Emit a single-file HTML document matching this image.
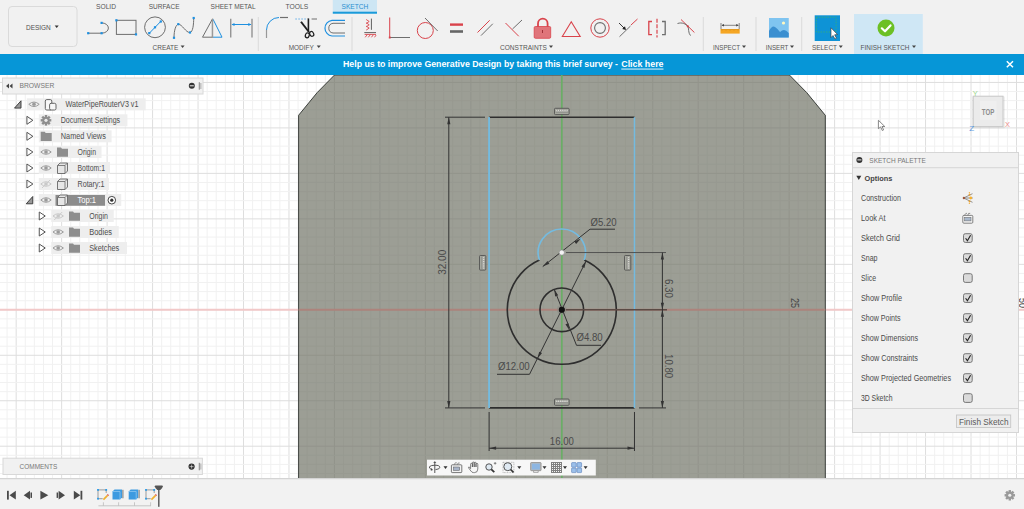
<!DOCTYPE html>
<html><head><meta charset="utf-8"><style>
html,body{margin:0;padding:0;width:1024px;height:509px;overflow:hidden;background:#f1f1f1;}
svg{display:block;font-family:"Liberation Sans",sans-serif;}
</style></head><body>
<svg width="1024" height="509" viewBox="0 0 1024 509">
<rect x="0" y="75" width="1024" height="403" fill="#ffffff"/>
<g>
<line x1="7.07" y1="75" x2="7.07" y2="478" stroke="#f1f1f1" stroke-width="1"/>
<line x1="16.16" y1="75" x2="16.16" y2="478" stroke="#dedede" stroke-width="1"/>
<line x1="25.25" y1="75" x2="25.25" y2="478" stroke="#f1f1f1" stroke-width="1"/>
<line x1="34.35" y1="75" x2="34.35" y2="478" stroke="#f1f1f1" stroke-width="1"/>
<line x1="43.44" y1="75" x2="43.44" y2="478" stroke="#f1f1f1" stroke-width="1"/>
<line x1="52.54" y1="75" x2="52.54" y2="478" stroke="#f1f1f1" stroke-width="1"/>
<line x1="61.63" y1="75" x2="61.63" y2="478" stroke="#dedede" stroke-width="1"/>
<line x1="70.72" y1="75" x2="70.72" y2="478" stroke="#f1f1f1" stroke-width="1"/>
<line x1="79.82" y1="75" x2="79.82" y2="478" stroke="#f1f1f1" stroke-width="1"/>
<line x1="88.91" y1="75" x2="88.91" y2="478" stroke="#f1f1f1" stroke-width="1"/>
<line x1="98.01" y1="75" x2="98.01" y2="478" stroke="#f1f1f1" stroke-width="1"/>
<line x1="107.10" y1="75" x2="107.10" y2="478" stroke="#dedede" stroke-width="1"/>
<line x1="116.19" y1="75" x2="116.19" y2="478" stroke="#f1f1f1" stroke-width="1"/>
<line x1="125.29" y1="75" x2="125.29" y2="478" stroke="#f1f1f1" stroke-width="1"/>
<line x1="134.38" y1="75" x2="134.38" y2="478" stroke="#f1f1f1" stroke-width="1"/>
<line x1="143.48" y1="75" x2="143.48" y2="478" stroke="#f1f1f1" stroke-width="1"/>
<line x1="152.57" y1="75" x2="152.57" y2="478" stroke="#dedede" stroke-width="1"/>
<line x1="161.66" y1="75" x2="161.66" y2="478" stroke="#f1f1f1" stroke-width="1"/>
<line x1="170.76" y1="75" x2="170.76" y2="478" stroke="#f1f1f1" stroke-width="1"/>
<line x1="179.85" y1="75" x2="179.85" y2="478" stroke="#f1f1f1" stroke-width="1"/>
<line x1="188.95" y1="75" x2="188.95" y2="478" stroke="#f1f1f1" stroke-width="1"/>
<line x1="198.04" y1="75" x2="198.04" y2="478" stroke="#dedede" stroke-width="1"/>
<line x1="207.13" y1="75" x2="207.13" y2="478" stroke="#f1f1f1" stroke-width="1"/>
<line x1="216.23" y1="75" x2="216.23" y2="478" stroke="#f1f1f1" stroke-width="1"/>
<line x1="225.32" y1="75" x2="225.32" y2="478" stroke="#f1f1f1" stroke-width="1"/>
<line x1="234.42" y1="75" x2="234.42" y2="478" stroke="#f1f1f1" stroke-width="1"/>
<line x1="243.51" y1="75" x2="243.51" y2="478" stroke="#dedede" stroke-width="1"/>
<line x1="252.60" y1="75" x2="252.60" y2="478" stroke="#f1f1f1" stroke-width="1"/>
<line x1="261.70" y1="75" x2="261.70" y2="478" stroke="#f1f1f1" stroke-width="1"/>
<line x1="270.79" y1="75" x2="270.79" y2="478" stroke="#f1f1f1" stroke-width="1"/>
<line x1="279.89" y1="75" x2="279.89" y2="478" stroke="#f1f1f1" stroke-width="1"/>
<line x1="288.98" y1="75" x2="288.98" y2="478" stroke="#dedede" stroke-width="1"/>
<line x1="298.07" y1="75" x2="298.07" y2="478" stroke="#f1f1f1" stroke-width="1"/>
<line x1="307.17" y1="75" x2="307.17" y2="478" stroke="#f1f1f1" stroke-width="1"/>
<line x1="316.26" y1="75" x2="316.26" y2="478" stroke="#f1f1f1" stroke-width="1"/>
<line x1="325.36" y1="75" x2="325.36" y2="478" stroke="#f1f1f1" stroke-width="1"/>
<line x1="334.45" y1="75" x2="334.45" y2="478" stroke="#dedede" stroke-width="1"/>
<line x1="343.54" y1="75" x2="343.54" y2="478" stroke="#f1f1f1" stroke-width="1"/>
<line x1="352.64" y1="75" x2="352.64" y2="478" stroke="#f1f1f1" stroke-width="1"/>
<line x1="361.73" y1="75" x2="361.73" y2="478" stroke="#f1f1f1" stroke-width="1"/>
<line x1="370.83" y1="75" x2="370.83" y2="478" stroke="#f1f1f1" stroke-width="1"/>
<line x1="379.92" y1="75" x2="379.92" y2="478" stroke="#dedede" stroke-width="1"/>
<line x1="389.01" y1="75" x2="389.01" y2="478" stroke="#f1f1f1" stroke-width="1"/>
<line x1="398.11" y1="75" x2="398.11" y2="478" stroke="#f1f1f1" stroke-width="1"/>
<line x1="407.20" y1="75" x2="407.20" y2="478" stroke="#f1f1f1" stroke-width="1"/>
<line x1="416.30" y1="75" x2="416.30" y2="478" stroke="#f1f1f1" stroke-width="1"/>
<line x1="425.39" y1="75" x2="425.39" y2="478" stroke="#dedede" stroke-width="1"/>
<line x1="434.48" y1="75" x2="434.48" y2="478" stroke="#f1f1f1" stroke-width="1"/>
<line x1="443.58" y1="75" x2="443.58" y2="478" stroke="#f1f1f1" stroke-width="1"/>
<line x1="452.67" y1="75" x2="452.67" y2="478" stroke="#f1f1f1" stroke-width="1"/>
<line x1="461.77" y1="75" x2="461.77" y2="478" stroke="#f1f1f1" stroke-width="1"/>
<line x1="470.86" y1="75" x2="470.86" y2="478" stroke="#dedede" stroke-width="1"/>
<line x1="479.95" y1="75" x2="479.95" y2="478" stroke="#f1f1f1" stroke-width="1"/>
<line x1="489.05" y1="75" x2="489.05" y2="478" stroke="#f1f1f1" stroke-width="1"/>
<line x1="498.14" y1="75" x2="498.14" y2="478" stroke="#f1f1f1" stroke-width="1"/>
<line x1="507.24" y1="75" x2="507.24" y2="478" stroke="#f1f1f1" stroke-width="1"/>
<line x1="516.33" y1="75" x2="516.33" y2="478" stroke="#dedede" stroke-width="1"/>
<line x1="525.42" y1="75" x2="525.42" y2="478" stroke="#f1f1f1" stroke-width="1"/>
<line x1="534.52" y1="75" x2="534.52" y2="478" stroke="#f1f1f1" stroke-width="1"/>
<line x1="543.61" y1="75" x2="543.61" y2="478" stroke="#f1f1f1" stroke-width="1"/>
<line x1="552.71" y1="75" x2="552.71" y2="478" stroke="#f1f1f1" stroke-width="1"/>
<line x1="561.80" y1="75" x2="561.80" y2="478" stroke="#dedede" stroke-width="1"/>
<line x1="570.89" y1="75" x2="570.89" y2="478" stroke="#f1f1f1" stroke-width="1"/>
<line x1="579.99" y1="75" x2="579.99" y2="478" stroke="#f1f1f1" stroke-width="1"/>
<line x1="589.08" y1="75" x2="589.08" y2="478" stroke="#f1f1f1" stroke-width="1"/>
<line x1="598.18" y1="75" x2="598.18" y2="478" stroke="#f1f1f1" stroke-width="1"/>
<line x1="607.27" y1="75" x2="607.27" y2="478" stroke="#dedede" stroke-width="1"/>
<line x1="616.36" y1="75" x2="616.36" y2="478" stroke="#f1f1f1" stroke-width="1"/>
<line x1="625.46" y1="75" x2="625.46" y2="478" stroke="#f1f1f1" stroke-width="1"/>
<line x1="634.55" y1="75" x2="634.55" y2="478" stroke="#f1f1f1" stroke-width="1"/>
<line x1="643.65" y1="75" x2="643.65" y2="478" stroke="#f1f1f1" stroke-width="1"/>
<line x1="652.74" y1="75" x2="652.74" y2="478" stroke="#dedede" stroke-width="1"/>
<line x1="661.83" y1="75" x2="661.83" y2="478" stroke="#f1f1f1" stroke-width="1"/>
<line x1="670.93" y1="75" x2="670.93" y2="478" stroke="#f1f1f1" stroke-width="1"/>
<line x1="680.02" y1="75" x2="680.02" y2="478" stroke="#f1f1f1" stroke-width="1"/>
<line x1="689.12" y1="75" x2="689.12" y2="478" stroke="#f1f1f1" stroke-width="1"/>
<line x1="698.21" y1="75" x2="698.21" y2="478" stroke="#dedede" stroke-width="1"/>
<line x1="707.30" y1="75" x2="707.30" y2="478" stroke="#f1f1f1" stroke-width="1"/>
<line x1="716.40" y1="75" x2="716.40" y2="478" stroke="#f1f1f1" stroke-width="1"/>
<line x1="725.49" y1="75" x2="725.49" y2="478" stroke="#f1f1f1" stroke-width="1"/>
<line x1="734.59" y1="75" x2="734.59" y2="478" stroke="#f1f1f1" stroke-width="1"/>
<line x1="743.68" y1="75" x2="743.68" y2="478" stroke="#dedede" stroke-width="1"/>
<line x1="752.77" y1="75" x2="752.77" y2="478" stroke="#f1f1f1" stroke-width="1"/>
<line x1="761.87" y1="75" x2="761.87" y2="478" stroke="#f1f1f1" stroke-width="1"/>
<line x1="770.96" y1="75" x2="770.96" y2="478" stroke="#f1f1f1" stroke-width="1"/>
<line x1="780.06" y1="75" x2="780.06" y2="478" stroke="#f1f1f1" stroke-width="1"/>
<line x1="789.15" y1="75" x2="789.15" y2="478" stroke="#dedede" stroke-width="1"/>
<line x1="798.24" y1="75" x2="798.24" y2="478" stroke="#f1f1f1" stroke-width="1"/>
<line x1="807.34" y1="75" x2="807.34" y2="478" stroke="#f1f1f1" stroke-width="1"/>
<line x1="816.43" y1="75" x2="816.43" y2="478" stroke="#f1f1f1" stroke-width="1"/>
<line x1="825.53" y1="75" x2="825.53" y2="478" stroke="#f1f1f1" stroke-width="1"/>
<line x1="834.62" y1="75" x2="834.62" y2="478" stroke="#dedede" stroke-width="1"/>
<line x1="843.71" y1="75" x2="843.71" y2="478" stroke="#f1f1f1" stroke-width="1"/>
<line x1="852.81" y1="75" x2="852.81" y2="478" stroke="#f1f1f1" stroke-width="1"/>
<line x1="861.90" y1="75" x2="861.90" y2="478" stroke="#f1f1f1" stroke-width="1"/>
<line x1="871.00" y1="75" x2="871.00" y2="478" stroke="#f1f1f1" stroke-width="1"/>
<line x1="880.09" y1="75" x2="880.09" y2="478" stroke="#dedede" stroke-width="1"/>
<line x1="889.18" y1="75" x2="889.18" y2="478" stroke="#f1f1f1" stroke-width="1"/>
<line x1="898.28" y1="75" x2="898.28" y2="478" stroke="#f1f1f1" stroke-width="1"/>
<line x1="907.37" y1="75" x2="907.37" y2="478" stroke="#f1f1f1" stroke-width="1"/>
<line x1="916.47" y1="75" x2="916.47" y2="478" stroke="#f1f1f1" stroke-width="1"/>
<line x1="925.56" y1="75" x2="925.56" y2="478" stroke="#dedede" stroke-width="1"/>
<line x1="934.65" y1="75" x2="934.65" y2="478" stroke="#f1f1f1" stroke-width="1"/>
<line x1="943.75" y1="75" x2="943.75" y2="478" stroke="#f1f1f1" stroke-width="1"/>
<line x1="952.84" y1="75" x2="952.84" y2="478" stroke="#f1f1f1" stroke-width="1"/>
<line x1="961.94" y1="75" x2="961.94" y2="478" stroke="#f1f1f1" stroke-width="1"/>
<line x1="971.03" y1="75" x2="971.03" y2="478" stroke="#dedede" stroke-width="1"/>
<line x1="980.12" y1="75" x2="980.12" y2="478" stroke="#f1f1f1" stroke-width="1"/>
<line x1="989.22" y1="75" x2="989.22" y2="478" stroke="#f1f1f1" stroke-width="1"/>
<line x1="998.31" y1="75" x2="998.31" y2="478" stroke="#f1f1f1" stroke-width="1"/>
<line x1="1007.41" y1="75" x2="1007.41" y2="478" stroke="#f1f1f1" stroke-width="1"/>
<line x1="1016.50" y1="75" x2="1016.50" y2="478" stroke="#dedede" stroke-width="1"/>
<line x1="1025.59" y1="75" x2="1025.59" y2="478" stroke="#f1f1f1" stroke-width="1"/>
<line x1="0" y1="73.36" x2="1024" y2="73.36" stroke="#f1f1f1" stroke-width="1"/>
<line x1="0" y1="82.45" x2="1024" y2="82.45" stroke="#dedede" stroke-width="1"/>
<line x1="0" y1="91.54" x2="1024" y2="91.54" stroke="#f1f1f1" stroke-width="1"/>
<line x1="0" y1="100.64" x2="1024" y2="100.64" stroke="#f1f1f1" stroke-width="1"/>
<line x1="0" y1="109.73" x2="1024" y2="109.73" stroke="#f1f1f1" stroke-width="1"/>
<line x1="0" y1="118.83" x2="1024" y2="118.83" stroke="#f1f1f1" stroke-width="1"/>
<line x1="0" y1="127.92" x2="1024" y2="127.92" stroke="#dedede" stroke-width="1"/>
<line x1="0" y1="137.01" x2="1024" y2="137.01" stroke="#f1f1f1" stroke-width="1"/>
<line x1="0" y1="146.11" x2="1024" y2="146.11" stroke="#f1f1f1" stroke-width="1"/>
<line x1="0" y1="155.20" x2="1024" y2="155.20" stroke="#f1f1f1" stroke-width="1"/>
<line x1="0" y1="164.30" x2="1024" y2="164.30" stroke="#f1f1f1" stroke-width="1"/>
<line x1="0" y1="173.39" x2="1024" y2="173.39" stroke="#dedede" stroke-width="1"/>
<line x1="0" y1="182.48" x2="1024" y2="182.48" stroke="#f1f1f1" stroke-width="1"/>
<line x1="0" y1="191.58" x2="1024" y2="191.58" stroke="#f1f1f1" stroke-width="1"/>
<line x1="0" y1="200.67" x2="1024" y2="200.67" stroke="#f1f1f1" stroke-width="1"/>
<line x1="0" y1="209.77" x2="1024" y2="209.77" stroke="#f1f1f1" stroke-width="1"/>
<line x1="0" y1="218.86" x2="1024" y2="218.86" stroke="#dedede" stroke-width="1"/>
<line x1="0" y1="227.95" x2="1024" y2="227.95" stroke="#f1f1f1" stroke-width="1"/>
<line x1="0" y1="237.05" x2="1024" y2="237.05" stroke="#f1f1f1" stroke-width="1"/>
<line x1="0" y1="246.14" x2="1024" y2="246.14" stroke="#f1f1f1" stroke-width="1"/>
<line x1="0" y1="255.24" x2="1024" y2="255.24" stroke="#f1f1f1" stroke-width="1"/>
<line x1="0" y1="264.33" x2="1024" y2="264.33" stroke="#dedede" stroke-width="1"/>
<line x1="0" y1="273.42" x2="1024" y2="273.42" stroke="#f1f1f1" stroke-width="1"/>
<line x1="0" y1="282.52" x2="1024" y2="282.52" stroke="#f1f1f1" stroke-width="1"/>
<line x1="0" y1="291.61" x2="1024" y2="291.61" stroke="#f1f1f1" stroke-width="1"/>
<line x1="0" y1="300.71" x2="1024" y2="300.71" stroke="#f1f1f1" stroke-width="1"/>
<line x1="0" y1="309.80" x2="1024" y2="309.80" stroke="#dedede" stroke-width="1"/>
<line x1="0" y1="318.89" x2="1024" y2="318.89" stroke="#f1f1f1" stroke-width="1"/>
<line x1="0" y1="327.99" x2="1024" y2="327.99" stroke="#f1f1f1" stroke-width="1"/>
<line x1="0" y1="337.08" x2="1024" y2="337.08" stroke="#f1f1f1" stroke-width="1"/>
<line x1="0" y1="346.18" x2="1024" y2="346.18" stroke="#f1f1f1" stroke-width="1"/>
<line x1="0" y1="355.27" x2="1024" y2="355.27" stroke="#dedede" stroke-width="1"/>
<line x1="0" y1="364.36" x2="1024" y2="364.36" stroke="#f1f1f1" stroke-width="1"/>
<line x1="0" y1="373.46" x2="1024" y2="373.46" stroke="#f1f1f1" stroke-width="1"/>
<line x1="0" y1="382.55" x2="1024" y2="382.55" stroke="#f1f1f1" stroke-width="1"/>
<line x1="0" y1="391.65" x2="1024" y2="391.65" stroke="#f1f1f1" stroke-width="1"/>
<line x1="0" y1="400.74" x2="1024" y2="400.74" stroke="#dedede" stroke-width="1"/>
<line x1="0" y1="409.83" x2="1024" y2="409.83" stroke="#f1f1f1" stroke-width="1"/>
<line x1="0" y1="418.93" x2="1024" y2="418.93" stroke="#f1f1f1" stroke-width="1"/>
<line x1="0" y1="428.02" x2="1024" y2="428.02" stroke="#f1f1f1" stroke-width="1"/>
<line x1="0" y1="437.12" x2="1024" y2="437.12" stroke="#f1f1f1" stroke-width="1"/>
<line x1="0" y1="446.21" x2="1024" y2="446.21" stroke="#dedede" stroke-width="1"/>
<line x1="0" y1="455.30" x2="1024" y2="455.30" stroke="#f1f1f1" stroke-width="1"/>
<line x1="0" y1="464.40" x2="1024" y2="464.40" stroke="#f1f1f1" stroke-width="1"/>
<line x1="0" y1="473.49" x2="1024" y2="473.49" stroke="#f1f1f1" stroke-width="1"/>
</g>
<line x1="0" y1="309.8" x2="1024" y2="309.8" stroke="#f2c8c8" stroke-width="2"/>
<defs><clipPath id="pc"><polygon points="298.6,478 298.6,115.3 317.2,92.6 334.5,75 789.4,75 806.7,92.6 825.3,115.3 825.3,478"/></clipPath></defs>
<polygon points="298.6,478 298.6,115.3 317.2,92.6 334.5,75 789.4,75 806.7,92.6 825.3,115.3 825.3,478" fill="#9c9e95"/>
<g clip-path="url(#pc)">
<line x1="7.07" y1="75" x2="7.07" y2="478" stroke="#989a91" stroke-width="1"/>
<line x1="16.16" y1="75" x2="16.16" y2="478" stroke="#92948b" stroke-width="1"/>
<line x1="25.25" y1="75" x2="25.25" y2="478" stroke="#989a91" stroke-width="1"/>
<line x1="34.35" y1="75" x2="34.35" y2="478" stroke="#989a91" stroke-width="1"/>
<line x1="43.44" y1="75" x2="43.44" y2="478" stroke="#989a91" stroke-width="1"/>
<line x1="52.54" y1="75" x2="52.54" y2="478" stroke="#989a91" stroke-width="1"/>
<line x1="61.63" y1="75" x2="61.63" y2="478" stroke="#92948b" stroke-width="1"/>
<line x1="70.72" y1="75" x2="70.72" y2="478" stroke="#989a91" stroke-width="1"/>
<line x1="79.82" y1="75" x2="79.82" y2="478" stroke="#989a91" stroke-width="1"/>
<line x1="88.91" y1="75" x2="88.91" y2="478" stroke="#989a91" stroke-width="1"/>
<line x1="98.01" y1="75" x2="98.01" y2="478" stroke="#989a91" stroke-width="1"/>
<line x1="107.10" y1="75" x2="107.10" y2="478" stroke="#92948b" stroke-width="1"/>
<line x1="116.19" y1="75" x2="116.19" y2="478" stroke="#989a91" stroke-width="1"/>
<line x1="125.29" y1="75" x2="125.29" y2="478" stroke="#989a91" stroke-width="1"/>
<line x1="134.38" y1="75" x2="134.38" y2="478" stroke="#989a91" stroke-width="1"/>
<line x1="143.48" y1="75" x2="143.48" y2="478" stroke="#989a91" stroke-width="1"/>
<line x1="152.57" y1="75" x2="152.57" y2="478" stroke="#92948b" stroke-width="1"/>
<line x1="161.66" y1="75" x2="161.66" y2="478" stroke="#989a91" stroke-width="1"/>
<line x1="170.76" y1="75" x2="170.76" y2="478" stroke="#989a91" stroke-width="1"/>
<line x1="179.85" y1="75" x2="179.85" y2="478" stroke="#989a91" stroke-width="1"/>
<line x1="188.95" y1="75" x2="188.95" y2="478" stroke="#989a91" stroke-width="1"/>
<line x1="198.04" y1="75" x2="198.04" y2="478" stroke="#92948b" stroke-width="1"/>
<line x1="207.13" y1="75" x2="207.13" y2="478" stroke="#989a91" stroke-width="1"/>
<line x1="216.23" y1="75" x2="216.23" y2="478" stroke="#989a91" stroke-width="1"/>
<line x1="225.32" y1="75" x2="225.32" y2="478" stroke="#989a91" stroke-width="1"/>
<line x1="234.42" y1="75" x2="234.42" y2="478" stroke="#989a91" stroke-width="1"/>
<line x1="243.51" y1="75" x2="243.51" y2="478" stroke="#92948b" stroke-width="1"/>
<line x1="252.60" y1="75" x2="252.60" y2="478" stroke="#989a91" stroke-width="1"/>
<line x1="261.70" y1="75" x2="261.70" y2="478" stroke="#989a91" stroke-width="1"/>
<line x1="270.79" y1="75" x2="270.79" y2="478" stroke="#989a91" stroke-width="1"/>
<line x1="279.89" y1="75" x2="279.89" y2="478" stroke="#989a91" stroke-width="1"/>
<line x1="288.98" y1="75" x2="288.98" y2="478" stroke="#92948b" stroke-width="1"/>
<line x1="298.07" y1="75" x2="298.07" y2="478" stroke="#989a91" stroke-width="1"/>
<line x1="307.17" y1="75" x2="307.17" y2="478" stroke="#989a91" stroke-width="1"/>
<line x1="316.26" y1="75" x2="316.26" y2="478" stroke="#989a91" stroke-width="1"/>
<line x1="325.36" y1="75" x2="325.36" y2="478" stroke="#989a91" stroke-width="1"/>
<line x1="334.45" y1="75" x2="334.45" y2="478" stroke="#92948b" stroke-width="1"/>
<line x1="343.54" y1="75" x2="343.54" y2="478" stroke="#989a91" stroke-width="1"/>
<line x1="352.64" y1="75" x2="352.64" y2="478" stroke="#989a91" stroke-width="1"/>
<line x1="361.73" y1="75" x2="361.73" y2="478" stroke="#989a91" stroke-width="1"/>
<line x1="370.83" y1="75" x2="370.83" y2="478" stroke="#989a91" stroke-width="1"/>
<line x1="379.92" y1="75" x2="379.92" y2="478" stroke="#92948b" stroke-width="1"/>
<line x1="389.01" y1="75" x2="389.01" y2="478" stroke="#989a91" stroke-width="1"/>
<line x1="398.11" y1="75" x2="398.11" y2="478" stroke="#989a91" stroke-width="1"/>
<line x1="407.20" y1="75" x2="407.20" y2="478" stroke="#989a91" stroke-width="1"/>
<line x1="416.30" y1="75" x2="416.30" y2="478" stroke="#989a91" stroke-width="1"/>
<line x1="425.39" y1="75" x2="425.39" y2="478" stroke="#92948b" stroke-width="1"/>
<line x1="434.48" y1="75" x2="434.48" y2="478" stroke="#989a91" stroke-width="1"/>
<line x1="443.58" y1="75" x2="443.58" y2="478" stroke="#989a91" stroke-width="1"/>
<line x1="452.67" y1="75" x2="452.67" y2="478" stroke="#989a91" stroke-width="1"/>
<line x1="461.77" y1="75" x2="461.77" y2="478" stroke="#989a91" stroke-width="1"/>
<line x1="470.86" y1="75" x2="470.86" y2="478" stroke="#92948b" stroke-width="1"/>
<line x1="479.95" y1="75" x2="479.95" y2="478" stroke="#989a91" stroke-width="1"/>
<line x1="489.05" y1="75" x2="489.05" y2="478" stroke="#989a91" stroke-width="1"/>
<line x1="498.14" y1="75" x2="498.14" y2="478" stroke="#989a91" stroke-width="1"/>
<line x1="507.24" y1="75" x2="507.24" y2="478" stroke="#989a91" stroke-width="1"/>
<line x1="516.33" y1="75" x2="516.33" y2="478" stroke="#92948b" stroke-width="1"/>
<line x1="525.42" y1="75" x2="525.42" y2="478" stroke="#989a91" stroke-width="1"/>
<line x1="534.52" y1="75" x2="534.52" y2="478" stroke="#989a91" stroke-width="1"/>
<line x1="543.61" y1="75" x2="543.61" y2="478" stroke="#989a91" stroke-width="1"/>
<line x1="552.71" y1="75" x2="552.71" y2="478" stroke="#989a91" stroke-width="1"/>
<line x1="561.80" y1="75" x2="561.80" y2="478" stroke="#92948b" stroke-width="1"/>
<line x1="570.89" y1="75" x2="570.89" y2="478" stroke="#989a91" stroke-width="1"/>
<line x1="579.99" y1="75" x2="579.99" y2="478" stroke="#989a91" stroke-width="1"/>
<line x1="589.08" y1="75" x2="589.08" y2="478" stroke="#989a91" stroke-width="1"/>
<line x1="598.18" y1="75" x2="598.18" y2="478" stroke="#989a91" stroke-width="1"/>
<line x1="607.27" y1="75" x2="607.27" y2="478" stroke="#92948b" stroke-width="1"/>
<line x1="616.36" y1="75" x2="616.36" y2="478" stroke="#989a91" stroke-width="1"/>
<line x1="625.46" y1="75" x2="625.46" y2="478" stroke="#989a91" stroke-width="1"/>
<line x1="634.55" y1="75" x2="634.55" y2="478" stroke="#989a91" stroke-width="1"/>
<line x1="643.65" y1="75" x2="643.65" y2="478" stroke="#989a91" stroke-width="1"/>
<line x1="652.74" y1="75" x2="652.74" y2="478" stroke="#92948b" stroke-width="1"/>
<line x1="661.83" y1="75" x2="661.83" y2="478" stroke="#989a91" stroke-width="1"/>
<line x1="670.93" y1="75" x2="670.93" y2="478" stroke="#989a91" stroke-width="1"/>
<line x1="680.02" y1="75" x2="680.02" y2="478" stroke="#989a91" stroke-width="1"/>
<line x1="689.12" y1="75" x2="689.12" y2="478" stroke="#989a91" stroke-width="1"/>
<line x1="698.21" y1="75" x2="698.21" y2="478" stroke="#92948b" stroke-width="1"/>
<line x1="707.30" y1="75" x2="707.30" y2="478" stroke="#989a91" stroke-width="1"/>
<line x1="716.40" y1="75" x2="716.40" y2="478" stroke="#989a91" stroke-width="1"/>
<line x1="725.49" y1="75" x2="725.49" y2="478" stroke="#989a91" stroke-width="1"/>
<line x1="734.59" y1="75" x2="734.59" y2="478" stroke="#989a91" stroke-width="1"/>
<line x1="743.68" y1="75" x2="743.68" y2="478" stroke="#92948b" stroke-width="1"/>
<line x1="752.77" y1="75" x2="752.77" y2="478" stroke="#989a91" stroke-width="1"/>
<line x1="761.87" y1="75" x2="761.87" y2="478" stroke="#989a91" stroke-width="1"/>
<line x1="770.96" y1="75" x2="770.96" y2="478" stroke="#989a91" stroke-width="1"/>
<line x1="780.06" y1="75" x2="780.06" y2="478" stroke="#989a91" stroke-width="1"/>
<line x1="789.15" y1="75" x2="789.15" y2="478" stroke="#92948b" stroke-width="1"/>
<line x1="798.24" y1="75" x2="798.24" y2="478" stroke="#989a91" stroke-width="1"/>
<line x1="807.34" y1="75" x2="807.34" y2="478" stroke="#989a91" stroke-width="1"/>
<line x1="816.43" y1="75" x2="816.43" y2="478" stroke="#989a91" stroke-width="1"/>
<line x1="825.53" y1="75" x2="825.53" y2="478" stroke="#989a91" stroke-width="1"/>
<line x1="834.62" y1="75" x2="834.62" y2="478" stroke="#92948b" stroke-width="1"/>
<line x1="843.71" y1="75" x2="843.71" y2="478" stroke="#989a91" stroke-width="1"/>
<line x1="852.81" y1="75" x2="852.81" y2="478" stroke="#989a91" stroke-width="1"/>
<line x1="861.90" y1="75" x2="861.90" y2="478" stroke="#989a91" stroke-width="1"/>
<line x1="871.00" y1="75" x2="871.00" y2="478" stroke="#989a91" stroke-width="1"/>
<line x1="880.09" y1="75" x2="880.09" y2="478" stroke="#92948b" stroke-width="1"/>
<line x1="889.18" y1="75" x2="889.18" y2="478" stroke="#989a91" stroke-width="1"/>
<line x1="898.28" y1="75" x2="898.28" y2="478" stroke="#989a91" stroke-width="1"/>
<line x1="907.37" y1="75" x2="907.37" y2="478" stroke="#989a91" stroke-width="1"/>
<line x1="916.47" y1="75" x2="916.47" y2="478" stroke="#989a91" stroke-width="1"/>
<line x1="925.56" y1="75" x2="925.56" y2="478" stroke="#92948b" stroke-width="1"/>
<line x1="934.65" y1="75" x2="934.65" y2="478" stroke="#989a91" stroke-width="1"/>
<line x1="943.75" y1="75" x2="943.75" y2="478" stroke="#989a91" stroke-width="1"/>
<line x1="952.84" y1="75" x2="952.84" y2="478" stroke="#989a91" stroke-width="1"/>
<line x1="961.94" y1="75" x2="961.94" y2="478" stroke="#989a91" stroke-width="1"/>
<line x1="971.03" y1="75" x2="971.03" y2="478" stroke="#92948b" stroke-width="1"/>
<line x1="980.12" y1="75" x2="980.12" y2="478" stroke="#989a91" stroke-width="1"/>
<line x1="989.22" y1="75" x2="989.22" y2="478" stroke="#989a91" stroke-width="1"/>
<line x1="998.31" y1="75" x2="998.31" y2="478" stroke="#989a91" stroke-width="1"/>
<line x1="1007.41" y1="75" x2="1007.41" y2="478" stroke="#989a91" stroke-width="1"/>
<line x1="1016.50" y1="75" x2="1016.50" y2="478" stroke="#92948b" stroke-width="1"/>
<line x1="1025.59" y1="75" x2="1025.59" y2="478" stroke="#989a91" stroke-width="1"/>
<line x1="0" y1="73.36" x2="1024" y2="73.36" stroke="#989a91" stroke-width="1"/>
<line x1="0" y1="82.45" x2="1024" y2="82.45" stroke="#92948b" stroke-width="1"/>
<line x1="0" y1="91.54" x2="1024" y2="91.54" stroke="#989a91" stroke-width="1"/>
<line x1="0" y1="100.64" x2="1024" y2="100.64" stroke="#989a91" stroke-width="1"/>
<line x1="0" y1="109.73" x2="1024" y2="109.73" stroke="#989a91" stroke-width="1"/>
<line x1="0" y1="118.83" x2="1024" y2="118.83" stroke="#989a91" stroke-width="1"/>
<line x1="0" y1="127.92" x2="1024" y2="127.92" stroke="#92948b" stroke-width="1"/>
<line x1="0" y1="137.01" x2="1024" y2="137.01" stroke="#989a91" stroke-width="1"/>
<line x1="0" y1="146.11" x2="1024" y2="146.11" stroke="#989a91" stroke-width="1"/>
<line x1="0" y1="155.20" x2="1024" y2="155.20" stroke="#989a91" stroke-width="1"/>
<line x1="0" y1="164.30" x2="1024" y2="164.30" stroke="#989a91" stroke-width="1"/>
<line x1="0" y1="173.39" x2="1024" y2="173.39" stroke="#92948b" stroke-width="1"/>
<line x1="0" y1="182.48" x2="1024" y2="182.48" stroke="#989a91" stroke-width="1"/>
<line x1="0" y1="191.58" x2="1024" y2="191.58" stroke="#989a91" stroke-width="1"/>
<line x1="0" y1="200.67" x2="1024" y2="200.67" stroke="#989a91" stroke-width="1"/>
<line x1="0" y1="209.77" x2="1024" y2="209.77" stroke="#989a91" stroke-width="1"/>
<line x1="0" y1="218.86" x2="1024" y2="218.86" stroke="#92948b" stroke-width="1"/>
<line x1="0" y1="227.95" x2="1024" y2="227.95" stroke="#989a91" stroke-width="1"/>
<line x1="0" y1="237.05" x2="1024" y2="237.05" stroke="#989a91" stroke-width="1"/>
<line x1="0" y1="246.14" x2="1024" y2="246.14" stroke="#989a91" stroke-width="1"/>
<line x1="0" y1="255.24" x2="1024" y2="255.24" stroke="#989a91" stroke-width="1"/>
<line x1="0" y1="264.33" x2="1024" y2="264.33" stroke="#92948b" stroke-width="1"/>
<line x1="0" y1="273.42" x2="1024" y2="273.42" stroke="#989a91" stroke-width="1"/>
<line x1="0" y1="282.52" x2="1024" y2="282.52" stroke="#989a91" stroke-width="1"/>
<line x1="0" y1="291.61" x2="1024" y2="291.61" stroke="#989a91" stroke-width="1"/>
<line x1="0" y1="300.71" x2="1024" y2="300.71" stroke="#989a91" stroke-width="1"/>
<line x1="0" y1="309.80" x2="1024" y2="309.80" stroke="#92948b" stroke-width="1"/>
<line x1="0" y1="318.89" x2="1024" y2="318.89" stroke="#989a91" stroke-width="1"/>
<line x1="0" y1="327.99" x2="1024" y2="327.99" stroke="#989a91" stroke-width="1"/>
<line x1="0" y1="337.08" x2="1024" y2="337.08" stroke="#989a91" stroke-width="1"/>
<line x1="0" y1="346.18" x2="1024" y2="346.18" stroke="#989a91" stroke-width="1"/>
<line x1="0" y1="355.27" x2="1024" y2="355.27" stroke="#92948b" stroke-width="1"/>
<line x1="0" y1="364.36" x2="1024" y2="364.36" stroke="#989a91" stroke-width="1"/>
<line x1="0" y1="373.46" x2="1024" y2="373.46" stroke="#989a91" stroke-width="1"/>
<line x1="0" y1="382.55" x2="1024" y2="382.55" stroke="#989a91" stroke-width="1"/>
<line x1="0" y1="391.65" x2="1024" y2="391.65" stroke="#989a91" stroke-width="1"/>
<line x1="0" y1="400.74" x2="1024" y2="400.74" stroke="#92948b" stroke-width="1"/>
<line x1="0" y1="409.83" x2="1024" y2="409.83" stroke="#989a91" stroke-width="1"/>
<line x1="0" y1="418.93" x2="1024" y2="418.93" stroke="#989a91" stroke-width="1"/>
<line x1="0" y1="428.02" x2="1024" y2="428.02" stroke="#989a91" stroke-width="1"/>
<line x1="0" y1="437.12" x2="1024" y2="437.12" stroke="#989a91" stroke-width="1"/>
<line x1="0" y1="446.21" x2="1024" y2="446.21" stroke="#92948b" stroke-width="1"/>
<line x1="0" y1="455.30" x2="1024" y2="455.30" stroke="#989a91" stroke-width="1"/>
<line x1="0" y1="464.40" x2="1024" y2="464.40" stroke="#989a91" stroke-width="1"/>
<line x1="0" y1="473.49" x2="1024" y2="473.49" stroke="#989a91" stroke-width="1"/>
</g>
<polyline points="298.6,478 298.6,115.3 317.2,92.6 334.5,75 789.4,75 806.7,92.6 825.3,115.3 825.3,478" fill="none" stroke="#3e423e" stroke-width="1"/>
<g clip-path="url(#pc)"><line x1="0" y1="309.8" x2="1024" y2="309.8" stroke="#ad837c" stroke-width="1.9"/><line x1="561.8" y1="75" x2="561.8" y2="478" stroke="#6aae66" stroke-width="1.7"/></g>
<line x1="489.11999999999995" y1="117.19800000000001" x2="634.48" y2="117.19800000000001" stroke="#2e2e2e" stroke-width="1.6"/>
<line x1="489.11999999999995" y1="407.918" x2="634.48" y2="407.918" stroke="#2e2e2e" stroke-width="1.6"/>
<line x1="489.11999999999995" y1="117.19800000000001" x2="489.11999999999995" y2="478" stroke="#74bbe0" stroke-width="1.5" clip-path="url(#rc)"/>
<defs><clipPath id="rc"><rect x="0" y="0" width="1024" height="407.918"/></clipPath></defs>
<line x1="634.48" y1="117.19800000000001" x2="634.48" y2="407.918" stroke="#74bbe0" stroke-width="1.5"/>
<line x1="489.11999999999995" y1="117.19800000000001" x2="489.11999999999995" y2="407.918" stroke="#74bbe0" stroke-width="1.5"/>
<path d="M539.41,260.10 A54.510000000000005,54.510000000000005 0 1 0 584.19,260.10" fill="none" stroke="#2e2e2e" stroke-width="1.6"/>
<path d="M539.41,260.10 A23.621000000000002,23.621000000000002 0 1 1 584.19,260.10" fill="none" stroke="#74bbe0" stroke-width="1.6"/>
<circle cx="561.8" cy="309.8" r="21.804000000000002" fill="none" stroke="#2e2e2e" stroke-width="1.6"/>
<circle cx="561.8" cy="309.8" r="5" fill="#8a8a86" opacity="0.6"/>
<circle cx="561.8" cy="309.8" r="3" fill="#111"/>
<line x1="445.00" y1="117.20" x2="485.00" y2="117.20" stroke="#333" stroke-width="1"/>
<line x1="445.00" y1="407.92" x2="485.00" y2="407.92" stroke="#333" stroke-width="1"/>
<line x1="448.80" y1="117.20" x2="448.80" y2="407.92" stroke="#333" stroke-width="1"/>
<polygon points="448.80,117.20 450.40,124.20 447.20,124.20" fill="#333"/>
<polygon points="448.80,407.92 447.20,400.92 450.40,400.92" fill="#333"/>
<text transform="translate(445.6,262.3) rotate(-90)" x="0" y="0" font-size="10.5" fill="#4a4a4a" text-anchor="middle" textLength="25" lengthAdjust="spacingAndGlyphs">32.00</text>
<line x1="489.12" y1="412.00" x2="489.12" y2="451.00" stroke="#333" stroke-width="1"/>
<line x1="634.48" y1="412.00" x2="634.48" y2="451.00" stroke="#333" stroke-width="1"/>
<line x1="489.12" y1="448.20" x2="634.48" y2="448.20" stroke="#333" stroke-width="1"/>
<polygon points="489.12,448.20 496.12,446.60 496.12,449.80" fill="#333"/>
<polygon points="634.48,448.20 627.48,449.80 627.48,446.60" fill="#333"/>
<text x="561.8" y="444.5" font-size="10.5" fill="#4a4a4a" text-anchor="middle" textLength="24" lengthAdjust="spacingAndGlyphs">16.00</text>
<line x1="566.00" y1="252.56" x2="666.00" y2="252.56" stroke="#4a4a4a" stroke-width="0.9"/>
<line x1="565.80" y1="309.80" x2="667.00" y2="309.80" stroke="#5a4a44" stroke-width="1.6"/>
<line x1="639.00" y1="407.92" x2="666.00" y2="407.92" stroke="#333" stroke-width="1"/>
<line x1="662.40" y1="252.56" x2="662.40" y2="407.92" stroke="#333" stroke-width="1"/>
<polygon points="662.40,252.56 664.00,259.56 660.80,259.56" fill="#333"/>
<polygon points="662.40,309.80 660.80,302.80 664.00,302.80" fill="#333"/>
<polygon points="662.40,309.80 664.00,316.80 660.80,316.80" fill="#333"/>
<polygon points="662.40,407.92 660.80,400.92 664.00,400.92" fill="#333"/>
<text transform="translate(665.3,288.4) rotate(90)" x="0" y="0" font-size="10.5" fill="#4a4a4a" text-anchor="middle" textLength="19" lengthAdjust="spacingAndGlyphs">6.30</text>
<text transform="translate(665.3,366.1) rotate(90)" x="0" y="0" font-size="10.5" fill="#4a4a4a" text-anchor="middle" textLength="24" lengthAdjust="spacingAndGlyphs">10.80</text>
<line x1="542.77" y1="266.55" x2="590.00" y2="229.20" stroke="#333" stroke-width="1"/>
<line x1="590.00" y1="229.20" x2="615.00" y2="229.20" stroke="#333" stroke-width="1"/>
<polygon points="580.83,238.58 576.14,244.01 574.25,241.43" fill="#333"/>
<polygon points="542.77,266.55 547.46,261.12 549.35,263.70" fill="#333"/>
<text x="590.50" y="226.05" font-size="10" fill="#4a4a4a" font-weight="normal" textLength="26.00" lengthAdjust="spacingAndGlyphs" >Ø5.20</text>
<line x1="586.07" y1="260.99" x2="529.50" y2="374.30" stroke="#333" stroke-width="1"/>
<line x1="529.50" y1="374.30" x2="497.00" y2="374.30" stroke="#333" stroke-width="1"/>
<polygon points="586.07,260.99 584.39,267.97 581.52,266.55" fill="#333"/>
<polygon points="537.53,358.61 539.21,351.63 542.08,353.05" fill="#333"/>
<text x="498.00" y="370.14" font-size="10" fill="#4a4a4a" font-weight="normal" textLength="31.60" lengthAdjust="spacingAndGlyphs" >Ø12.00</text>
<line x1="554.23" y1="289.35" x2="576.50" y2="345.30" stroke="#333" stroke-width="1"/>
<line x1="576.50" y1="345.30" x2="601.00" y2="345.30" stroke="#333" stroke-width="1"/>
<polygon points="569.37,330.25 565.44,324.24 568.44,323.13" fill="#333"/>
<polygon points="554.23,289.35 558.16,295.36 555.16,296.47" fill="#333"/>
<text x="576.50" y="341.44" font-size="10" fill="#4a4a4a" font-weight="normal" textLength="26.20" lengthAdjust="spacingAndGlyphs" >Ø4.80</text>
<rect x="554.5" y="108.3" width="14.6" height="6.3" rx="0.9" fill="#a6a89f" stroke="#4a4a4a" stroke-width="0.8"/>
<rect x="556.0" y="109.89999999999999" width="11.6" height="1.6" fill="#d8d8d2"/>
<line x1="555.70" y1="112.10" x2="567.90" y2="112.10" stroke="#707070" stroke-width="0.6"/>
<line x1="557.30" y1="109.70" x2="557.30" y2="110.90" stroke="#666" stroke-width="0.6"/>
<line x1="559.50" y1="109.70" x2="559.50" y2="110.90" stroke="#666" stroke-width="0.6"/>
<line x1="561.70" y1="109.70" x2="561.70" y2="110.90" stroke="#666" stroke-width="0.6"/>
<line x1="563.90" y1="109.70" x2="563.90" y2="110.90" stroke="#666" stroke-width="0.6"/>
<line x1="566.10" y1="109.70" x2="566.10" y2="110.90" stroke="#666" stroke-width="0.6"/>
<rect x="554.5" y="399" width="14.6" height="6.3" rx="0.9" fill="#a6a89f" stroke="#4a4a4a" stroke-width="0.8"/>
<rect x="556.0" y="400.6" width="11.6" height="1.6" fill="#d8d8d2"/>
<line x1="555.70" y1="402.80" x2="567.90" y2="402.80" stroke="#707070" stroke-width="0.6"/>
<line x1="557.30" y1="400.40" x2="557.30" y2="401.60" stroke="#666" stroke-width="0.6"/>
<line x1="559.50" y1="400.40" x2="559.50" y2="401.60" stroke="#666" stroke-width="0.6"/>
<line x1="561.70" y1="400.40" x2="561.70" y2="401.60" stroke="#666" stroke-width="0.6"/>
<line x1="563.90" y1="400.40" x2="563.90" y2="401.60" stroke="#666" stroke-width="0.6"/>
<line x1="566.10" y1="400.40" x2="566.10" y2="401.60" stroke="#666" stroke-width="0.6"/>
<rect x="479.5" y="255.5" width="6.3" height="14.6" rx="0.9" fill="#a6a89f" stroke="#4a4a4a" stroke-width="0.8"/>
<rect x="482.6" y="257.0" width="1.6" height="11.6" fill="#d8d8d2"/>
<line x1="482.00" y1="256.70" x2="482.00" y2="268.90" stroke="#707070" stroke-width="0.6"/>
<line x1="483.20" y1="258.30" x2="484.40" y2="258.30" stroke="#666" stroke-width="0.6"/>
<line x1="483.20" y1="260.50" x2="484.40" y2="260.50" stroke="#666" stroke-width="0.6"/>
<line x1="483.20" y1="262.70" x2="484.40" y2="262.70" stroke="#666" stroke-width="0.6"/>
<line x1="483.20" y1="264.90" x2="484.40" y2="264.90" stroke="#666" stroke-width="0.6"/>
<line x1="483.20" y1="267.10" x2="484.40" y2="267.10" stroke="#666" stroke-width="0.6"/>
<rect x="624.5" y="255.5" width="6.3" height="14.6" rx="0.9" fill="#a6a89f" stroke="#4a4a4a" stroke-width="0.8"/>
<rect x="627.6" y="257.0" width="1.6" height="11.6" fill="#d8d8d2"/>
<line x1="627.00" y1="256.70" x2="627.00" y2="268.90" stroke="#707070" stroke-width="0.6"/>
<line x1="628.20" y1="258.30" x2="629.40" y2="258.30" stroke="#666" stroke-width="0.6"/>
<line x1="628.20" y1="260.50" x2="629.40" y2="260.50" stroke="#666" stroke-width="0.6"/>
<line x1="628.20" y1="262.70" x2="629.40" y2="262.70" stroke="#666" stroke-width="0.6"/>
<line x1="628.20" y1="264.90" x2="629.40" y2="264.90" stroke="#666" stroke-width="0.6"/>
<line x1="628.20" y1="267.10" x2="629.40" y2="267.10" stroke="#666" stroke-width="0.6"/>
<circle cx="561.8" cy="252.56" r="2.6" fill="#f4f4f4" stroke="#888" stroke-width="0.6"/>
<circle cx="561.8" cy="309.8" r="2.7" fill="#111"/>
<text transform="translate(791,303) rotate(90)" font-size="10.5" fill="#444" text-anchor="middle" textLength="10" lengthAdjust="spacingAndGlyphs">25</text>
<text transform="translate(1019,303) rotate(90)" font-size="10.5" fill="#444" text-anchor="middle" textLength="10" lengthAdjust="spacingAndGlyphs">50</text>
<rect x="972" y="96" width="33" height="32.5" rx="1.5" fill="#000" opacity="0.06"/>
<rect x="973.2" y="96.2" width="29.8" height="30.4" fill="#ebebeb" stroke="#c8c8c8" stroke-width="1"/>
<rect x="980" y="101" width="16.6" height="18.7" fill="#efefef"/>
<text x="981.80" y="114.53" font-size="8.6" fill="#8c8c8c" font-weight="bold" textLength="12.50" lengthAdjust="spacingAndGlyphs" >TOP</text>
<text x="972.8" y="95.5" font-size="7.5" fill="#9ad88a" textLength="5" lengthAdjust="spacingAndGlyphs">Y</text>
<text x="1005" y="126.5" font-size="7.5" fill="#ee8c8c" textLength="5" lengthAdjust="spacingAndGlyphs">X</text>
<text x="969.3" y="130.5" font-size="7.5" fill="#5a98e0" textLength="5" lengthAdjust="spacingAndGlyphs">Z</text>
<path d="M878.4,120.3 V128.7 L880.6,126.9 L882.3,130.5 L883.6,129.9 L882,126.5 L884.8,126.5 Z" fill="#fff" stroke="#6a6a6a" stroke-width="0.8" stroke-linejoin="round"/>
<rect x="2.5" y="78" width="200.5" height="16" fill="#f1f1f1" stroke="#d8d8d8" stroke-width="1"/>
<path d="M6,86 l3,-2.5 v5 z M9.5,86 l3,-2.5 v5 z" fill="#444"/>
<text x="19.50" y="88.47" font-size="7.6" fill="#777" font-weight="normal" textLength="34.80" lengthAdjust="spacingAndGlyphs" >BROWSER</text>
<circle cx="191.8" cy="85.8" r="3" fill="#333"/><rect x="189.8" y="85.3" width="4" height="1" fill="#eee"/>
<rect x="198.8" y="82.2" width="0.9" height="7.5" fill="#777"/><rect x="200" y="83" width="1.6" height="6" fill="#c4c4c4"/>
<path d="M14.5,108.1 L21,100.8 L21,108.1 z" fill="#999" stroke="#333" stroke-width="0.9" stroke-linejoin="round"/>
<rect x="26.8" y="98.3" width="118.89999999999999" height="12" fill="#eeeeee"/>
<path d="M28.8,104.3 Q34,99.8 39.2,104.3 Q34,108.8 28.8,104.3 z" fill="none" stroke="#9a9a9a" stroke-width="1"/>
<circle cx="34" cy="104.3" r="1.8" fill="#9a9a9a"/>
<rect x="45.3" y="99.6" width="6.5" height="10.4" rx="1.5" fill="#f7f7f7" stroke="#555" stroke-width="0.9"/><rect x="49.6" y="103.3" width="6.4" height="6.7" rx="1.5" fill="#f7f7f7" stroke="#555" stroke-width="0.9"/>
<text x="65.50" y="107.36" font-size="8.4" fill="#4d4d4d" font-weight="normal" textLength="72.90" lengthAdjust="spacingAndGlyphs" >WaterPipeRouterV3 v1</text>
<path d="M26.9,116.3 L32.9,120.3 L26.9,124.3 z" fill="none" stroke="#555" stroke-width="1"/>
<rect x="38.8" y="114.3" width="88.60000000000001" height="12" fill="#eeeeee"/>
<g transform="translate(46,120.3)"><circle r="3.6" fill="#8e8e8e"/><rect x="-1.2" y="-5.3" width="2.4" height="2.4" fill="#8e8e8e" transform="rotate(0)"/><rect x="-1.2" y="-5.3" width="2.4" height="2.4" fill="#8e8e8e" transform="rotate(45)"/><rect x="-1.2" y="-5.3" width="2.4" height="2.4" fill="#8e8e8e" transform="rotate(90)"/><rect x="-1.2" y="-5.3" width="2.4" height="2.4" fill="#8e8e8e" transform="rotate(135)"/><rect x="-1.2" y="-5.3" width="2.4" height="2.4" fill="#8e8e8e" transform="rotate(180)"/><rect x="-1.2" y="-5.3" width="2.4" height="2.4" fill="#8e8e8e" transform="rotate(225)"/><rect x="-1.2" y="-5.3" width="2.4" height="2.4" fill="#8e8e8e" transform="rotate(270)"/><rect x="-1.2" y="-5.3" width="2.4" height="2.4" fill="#8e8e8e" transform="rotate(315)"/><circle r="1.6" fill="#ececec"/></g>
<text x="60.80" y="123.36" font-size="8.4" fill="#4d4d4d" font-weight="normal" textLength="59.30" lengthAdjust="spacingAndGlyphs" >Document Settings</text>
<path d="M26.9,132.3 L32.9,136.3 L26.9,140.3 z" fill="none" stroke="#555" stroke-width="1"/>
<rect x="38.8" y="130.3" width="72.8" height="12" fill="#eeeeee"/>
<path d="M40.7,131.8 h4 l1,1.2 h6 v8 h-11 z" fill="#8e8e8e"/>
<text x="60.80" y="139.36" font-size="8.4" fill="#4d4d4d" font-weight="normal" textLength="45.00" lengthAdjust="spacingAndGlyphs" >Named Views</text>
<path d="M26.9,148 L32.9,152 L26.9,156 z" fill="none" stroke="#555" stroke-width="1"/>
<rect x="38.8" y="146" width="62.7" height="12" fill="#eeeeee"/>
<path d="M40.8,152 Q46,147.5 51.2,152 Q46,156.5 40.8,152 z" fill="none" stroke="#9a9a9a" stroke-width="1"/>
<circle cx="46" cy="152" r="1.8" fill="#9a9a9a"/>
<path d="M57,147.5 h4 l1,1.2 h6 v8 h-11 z" fill="#8e8e8e"/>
<text x="77.60" y="155.06" font-size="8.4" fill="#4d4d4d" font-weight="normal" textLength="18.40" lengthAdjust="spacingAndGlyphs" >Origin</text>
<path d="M26.9,164 L32.9,168 L26.9,172 z" fill="none" stroke="#555" stroke-width="1"/>
<rect x="38.8" y="162" width="71.2" height="12" fill="#eeeeee"/>
<path d="M40.8,168 Q46,163.5 51.2,168 Q46,172.5 40.8,168 z" fill="none" stroke="#9a9a9a" stroke-width="1"/>
<circle cx="46" cy="168" r="1.8" fill="#9a9a9a"/>
<path d="M57.5,165.5 l2.5,-2.5 h7.5 v8 l-2.5,2.5 h-7.5 z" fill="#e6e6e6" stroke="#666" stroke-width="0.9"/>
<path d="M57.5,165.5 h7.5 v8 M65,165.5 l2.5,-2.5" fill="none" stroke="#666" stroke-width="0.8"/>
<text x="77.50" y="171.06" font-size="8.4" fill="#4d4d4d" font-weight="normal" textLength="27.50" lengthAdjust="spacingAndGlyphs" >Bottom:1</text>
<path d="M26.9,180 L32.9,184 L26.9,188 z" fill="none" stroke="#555" stroke-width="1"/>
<rect x="38.8" y="178" width="70.2" height="12" fill="#eeeeee"/>
<path d="M40.8,184 Q46,179.5 51.2,184 Q46,188.5 40.8,184 z" fill="none" stroke="#c8c8c8" stroke-width="1"/>
<circle cx="46" cy="184" r="1.8" fill="#c8c8c8"/>
<line x1="42" y1="188" x2="50" y2="180" stroke="#c8c8c8" stroke-width="0.9"/>
<path d="M57.5,181.5 l2.5,-2.5 h7.5 v8 l-2.5,2.5 h-7.5 z" fill="#e6e6e6" stroke="#666" stroke-width="0.9"/>
<path d="M57.5,181.5 h7.5 v8 M65,181.5 l2.5,-2.5" fill="none" stroke="#666" stroke-width="0.8"/>
<text x="77.50" y="187.06" font-size="8.4" fill="#4d4d4d" font-weight="normal" textLength="27.00" lengthAdjust="spacingAndGlyphs" >Rotary:1</text>
<path d="M26.25,203.8 L32.75,196.5 L32.75,203.8 z" fill="#999" stroke="#333" stroke-width="0.9" stroke-linejoin="round"/>
<rect x="38.8" y="194" width="82.45" height="12" fill="#eeeeee"/>
<path d="M40.8,200 Q46,195.5 51.2,200 Q46,204.5 40.8,200 z" fill="none" stroke="#9a9a9a" stroke-width="1"/>
<circle cx="46" cy="200" r="1.8" fill="#9a9a9a"/>
<rect x="55.5" y="195" width="49.5" height="10.75" fill="#8c8c8c"/>
<path d="M57.5,197.5 l2.5,-2.5 h7.5 v8 l-2.5,2.5 h-7.5 z" fill="#e6e6e6" stroke="#666" stroke-width="0.9"/>
<path d="M57.5,197.5 h7.5 v8 M65,197.5 l2.5,-2.5" fill="none" stroke="#666" stroke-width="0.8"/>
<text x="77.50" y="203.36" font-size="8.4" fill="#ffffff" font-weight="normal" textLength="18.50" lengthAdjust="spacingAndGlyphs" >Top:1</text>
<circle cx="111.8" cy="200.2" r="3.8" fill="#fff" stroke="#333" stroke-width="0.9"/><circle cx="111.8" cy="200.2" r="1.6" fill="#333"/>
<path d="M39.25,212 L45.25,216 L39.25,220 z" fill="none" stroke="#555" stroke-width="1"/>
<rect x="51.25" y="210" width="62.5" height="12" fill="#eeeeee"/>
<path d="M53.0,216 Q58.2,211.5 63.400000000000006,216 Q58.2,220.5 53.0,216 z" fill="none" stroke="#c8c8c8" stroke-width="1"/>
<circle cx="58.2" cy="216" r="1.8" fill="#c8c8c8"/>
<line x1="54.2" y1="220" x2="62.2" y2="212" stroke="#c8c8c8" stroke-width="0.9"/>
<path d="M69,211.5 h4 l1,1.2 h6 v8 h-11 z" fill="#8e8e8e"/>
<text x="89.25" y="219.06" font-size="8.4" fill="#4d4d4d" font-weight="normal" textLength="18.75" lengthAdjust="spacingAndGlyphs" >Origin</text>
<path d="M39.25,228 L45.25,232 L39.25,236 z" fill="none" stroke="#555" stroke-width="1"/>
<rect x="51.25" y="226" width="67.5" height="12" fill="#eeeeee"/>
<path d="M53.0,232 Q58.2,227.5 63.400000000000006,232 Q58.2,236.5 53.0,232 z" fill="none" stroke="#9a9a9a" stroke-width="1"/>
<circle cx="58.2" cy="232" r="1.8" fill="#9a9a9a"/>
<path d="M69,227.5 h4 l1,1.2 h6 v8 h-11 z" fill="#8e8e8e"/>
<text x="89.25" y="235.06" font-size="8.4" fill="#4d4d4d" font-weight="normal" textLength="22.75" lengthAdjust="spacingAndGlyphs" >Bodies</text>
<path d="M39.25,244 L45.25,248 L39.25,252 z" fill="none" stroke="#555" stroke-width="1"/>
<rect x="51.25" y="242" width="75.75" height="12" fill="#eeeeee"/>
<path d="M53.0,248 Q58.2,243.5 63.400000000000006,248 Q58.2,252.5 53.0,248 z" fill="none" stroke="#9a9a9a" stroke-width="1"/>
<circle cx="58.2" cy="248" r="1.8" fill="#9a9a9a"/>
<path d="M69,243.5 h4 l1,1.2 h6 v8 h-11 z" fill="#8e8e8e"/>
<text x="89.25" y="251.06" font-size="8.4" fill="#4d4d4d" font-weight="normal" textLength="30.00" lengthAdjust="spacingAndGlyphs" >Sketches</text>
<rect x="3" y="458.2" width="199.4" height="16.3" fill="#f1f1f1" stroke="#d8d8d8" stroke-width="1"/>
<text x="19.60" y="469.27" font-size="7.6" fill="#777" font-weight="normal" textLength="37.70" lengthAdjust="spacingAndGlyphs" >COMMENTS</text>
<circle cx="191.6" cy="466.6" r="3.1" fill="#333"/><path d="M189.6,466.6 h4 M191.6,464.6 v4" stroke="#eee" stroke-width="0.6"/>
<rect x="198.8" y="462.8" width="0.9" height="7.5" fill="#777"/><rect x="200" y="463.5" width="1.6" height="6" fill="#c4c4c4"/>
<rect x="852.5" y="152.5" width="166" height="280" fill="#f1f1f1" stroke="#d6d6d6" stroke-width="1"/>
<line x1="853" y1="167.7" x2="1018" y2="167.7" stroke="#d6d6d6" stroke-width="1"/>
<circle cx="859.4" cy="159.9" r="3" fill="#333"/><rect x="857.4" y="159.4" width="4" height="1" fill="#eee"/>
<text x="869.30" y="162.67" font-size="7.6" fill="#777" font-weight="normal" textLength="56.50" lengthAdjust="spacingAndGlyphs" >SKETCH PALETTE</text>
<path d="M856.3,175.8 h5 l-2.5,4.2 z" fill="#333"/>
<text x="864.60" y="181.32" font-size="8" fill="#444" font-weight="bold" textLength="27.80" lengthAdjust="spacingAndGlyphs" >Options</text>
<text x="861.00" y="201.21" font-size="8.8" fill="#4a4a4a" font-weight="normal" textLength="40.00" lengthAdjust="spacingAndGlyphs" >Construction</text>
<path d="M972.5,193.7 L963.6,198.0 L972.5,202.3 M964.5,198.0 H972.8" fill="none" stroke="#777" stroke-width="0.8"/><circle cx="963.9" cy="198.0" r="1.2" fill="#a0583a"/><circle cx="970.7" cy="198.0" r="1.4" fill="#f5b030"/><circle cx="969.5" cy="194.7" r="1" fill="#e8a030"/><circle cx="969.5" cy="201.3" r="1" fill="#e8a030"/><circle cx="969.4" cy="192.7" r="0.7" fill="#f0b040"/><circle cx="969.4" cy="203.3" r="0.7" fill="#f0b040"/>
<text x="861.00" y="221.21" font-size="8.8" fill="#4a4a4a" font-weight="normal" textLength="24.50" lengthAdjust="spacingAndGlyphs" >Look At</text>
<rect x="962.8" y="215.4" width="10" height="7.8" rx="1" fill="#f4f4f4" stroke="#666" stroke-width="0.8"/><rect x="964.6" y="217.3" width="6.4" height="3.6" fill="#a8b8cc" stroke="#666" stroke-width="0.5"/><path d="M964.5,215.2 l1.4,-1.8 h1 M967.8,215.2 l0.8,-1.8 h1.6" fill="none" stroke="#666" stroke-width="0.7"/>
<text x="861.00" y="241.21" font-size="8.8" fill="#4a4a4a" font-weight="normal" textLength="39.00" lengthAdjust="spacingAndGlyphs" >Sketch Grid</text>
<rect x="963.5" y="233.7" width="8.7" height="8.7" rx="1.8" fill="#dadada" stroke="#6a6a6a" stroke-width="0.9"/>
<path d="M965.6,238.2 l1.8,2.5 l3.2,-5.5" fill="none" stroke="#222" stroke-width="1.1"/>
<text x="861.00" y="261.21" font-size="8.8" fill="#4a4a4a" font-weight="normal" textLength="16.50" lengthAdjust="spacingAndGlyphs" >Snap</text>
<rect x="963.5" y="253.7" width="8.7" height="8.7" rx="1.8" fill="#dadada" stroke="#6a6a6a" stroke-width="0.9"/>
<path d="M965.6,258.2 l1.8,2.5 l3.2,-5.5" fill="none" stroke="#222" stroke-width="1.1"/>
<text x="861.00" y="281.21" font-size="8.8" fill="#4a4a4a" font-weight="normal" textLength="15.00" lengthAdjust="spacingAndGlyphs" >Slice</text>
<rect x="963.5" y="273.7" width="8.7" height="8.7" rx="1.8" fill="#dadada" stroke="#6a6a6a" stroke-width="0.9"/>
<text x="861.00" y="301.21" font-size="8.8" fill="#4a4a4a" font-weight="normal" textLength="41.00" lengthAdjust="spacingAndGlyphs" >Show Profile</text>
<rect x="963.5" y="293.7" width="8.7" height="8.7" rx="1.8" fill="#dadada" stroke="#6a6a6a" stroke-width="0.9"/>
<path d="M965.6,298.2 l1.8,2.5 l3.2,-5.5" fill="none" stroke="#222" stroke-width="1.1"/>
<text x="861.00" y="321.21" font-size="8.8" fill="#4a4a4a" font-weight="normal" textLength="39.50" lengthAdjust="spacingAndGlyphs" >Show Points</text>
<rect x="963.5" y="313.7" width="8.7" height="8.7" rx="1.8" fill="#dadada" stroke="#6a6a6a" stroke-width="0.9"/>
<path d="M965.6,318.2 l1.8,2.5 l3.2,-5.5" fill="none" stroke="#222" stroke-width="1.1"/>
<text x="861.00" y="341.21" font-size="8.8" fill="#4a4a4a" font-weight="normal" textLength="57.00" lengthAdjust="spacingAndGlyphs" >Show Dimensions</text>
<rect x="963.5" y="333.7" width="8.7" height="8.7" rx="1.8" fill="#dadada" stroke="#6a6a6a" stroke-width="0.9"/>
<path d="M965.6,338.2 l1.8,2.5 l3.2,-5.5" fill="none" stroke="#222" stroke-width="1.1"/>
<text x="861.00" y="361.21" font-size="8.8" fill="#4a4a4a" font-weight="normal" textLength="57.00" lengthAdjust="spacingAndGlyphs" >Show Constraints</text>
<rect x="963.5" y="353.7" width="8.7" height="8.7" rx="1.8" fill="#dadada" stroke="#6a6a6a" stroke-width="0.9"/>
<path d="M965.6,358.2 l1.8,2.5 l3.2,-5.5" fill="none" stroke="#222" stroke-width="1.1"/>
<text x="861.00" y="381.21" font-size="8.8" fill="#4a4a4a" font-weight="normal" textLength="90.00" lengthAdjust="spacingAndGlyphs" >Show Projected Geometries</text>
<rect x="963.5" y="373.7" width="8.7" height="8.7" rx="1.8" fill="#dadada" stroke="#6a6a6a" stroke-width="0.9"/>
<path d="M965.6,378.2 l1.8,2.5 l3.2,-5.5" fill="none" stroke="#222" stroke-width="1.1"/>
<text x="861.00" y="401.21" font-size="8.8" fill="#4a4a4a" font-weight="normal" textLength="31.50" lengthAdjust="spacingAndGlyphs" >3D Sketch</text>
<rect x="963.5" y="393.7" width="8.7" height="8.7" rx="1.8" fill="#dadada" stroke="#6a6a6a" stroke-width="0.9"/>
<line x1="853" y1="408.5" x2="1018" y2="408.5" stroke="#d6d6d6" stroke-width="1"/>
<rect x="956.5" y="415" width="54.2" height="12.5" fill="#ececec" stroke="#c6c6c6" stroke-width="0.9"/>
<text x="959.00" y="425.13" font-size="8.6" fill="#5a5a5a" font-weight="normal" textLength="49.50" lengthAdjust="spacingAndGlyphs" >Finish Sketch</text>
<rect x="427" y="459.7" width="168.8" height="15.8" fill="#f7f7f7"/>
<g fill="none" stroke="#444" stroke-width="0.9"><path d="M434.8,462 V473"/><path d="M431,469.3 Q428.6,468 429.6,466.6 Q431,465.2 434.8,465.2 Q439.8,465.2 439.8,467.3 Q439.8,469.3 435.5,469.6"/></g><path d="M433.2,462.8 l1.6,-1.6 l1.6,1.6z M430.8,470.8 l0.4,-2.8 l1.8,2z" fill="#444"/>
<path d="M443.5,466.3 h4 l-2,2.6 z" fill="#333"/>
<rect x="451.4" y="464.8" width="10.4" height="7.8" rx="0.8" fill="#f2f2f2" stroke="#555" stroke-width="0.8"/><rect x="453.5" y="467" width="6.2" height="3.4" fill="#a8b4c8" stroke="#555" stroke-width="0.5"/><path d="M454.3,464.6 l1,-1.8 h1.5 M457.5,464.6 l0.6,-1.6 h1.6" fill="none" stroke="#555" stroke-width="0.6"/>
<path d="M470.6,468.6 V464.2 a0.9,0.9 0 0 1 1.8,0 V467 V462.9 a0.9,0.9 0 0 1 1.8,0 V467 V463.1 a0.9,0.9 0 0 1 1.8,0 V467 V464.2 a0.9,0.9 0 0 1 1.8,0 V469 Q477.8,472.6 474.6,472.6 H473.6 Q471.8,472.6 470.9,471 L468.6,467.9 Q468.2,467 469.2,466.9 Z" fill="#f6f6f6" stroke="#444" stroke-width="0.65" stroke-linejoin="round"/>
<circle cx="489" cy="467" r="3.2" fill="#dfe9f2" stroke="#444" stroke-width="0.9"/><path d="M491.3,469.3 l3,2.9" stroke="#333" stroke-width="1.7"/><path d="M493.8,463.3 h2.6 M495.1,462 v2.6" stroke="#444" stroke-width="0.6"/>
<rect x="503" y="462.3" width="10.9" height="10.3" fill="none" stroke="#666" stroke-width="0.5" stroke-dasharray="0.8,0.8"/><circle cx="507.8" cy="466.7" r="4" fill="#dfe9f2" stroke="#444" stroke-width="0.9"/><path d="M510.6,469.5 l2.9,2.8" stroke="#333" stroke-width="1.7"/>
<path d="M517.3,466.3 h4 l-2,2.6 z" fill="#333"/>
<rect x="530.6" y="462.5" width="10.5" height="8.2" rx="0.8" fill="#b8b8b8" stroke="#777" stroke-width="0.6"/><rect x="531.8" y="463.6" width="8.1" height="6" fill="#8db6e2"/><path d="M533.6,471 v1.4 h4.6 v-1.4" fill="none" stroke="#777" stroke-width="0.6"/>
<path d="M542.5,466.3 h4 l-2,2.6 z" fill="#333"/>
<rect x="551" y="462" width="11" height="11" fill="#808080"/><rect x="552" y="463" width="1" height="1" fill="#f4f4f4"/><rect x="552" y="465" width="1" height="1" fill="#f4f4f4"/><rect x="552" y="467" width="1" height="1" fill="#f4f4f4"/><rect x="552" y="469" width="1" height="1" fill="#f4f4f4"/><rect x="552" y="471" width="1" height="1" fill="#f4f4f4"/><rect x="554" y="463" width="1" height="1" fill="#f4f4f4"/><rect x="554" y="465" width="1" height="1" fill="#f4f4f4"/><rect x="554" y="467" width="1" height="1" fill="#f4f4f4"/><rect x="554" y="469" width="1" height="1" fill="#f4f4f4"/><rect x="554" y="471" width="1" height="1" fill="#f4f4f4"/><rect x="556" y="463" width="1" height="1" fill="#f4f4f4"/><rect x="556" y="465" width="1" height="1" fill="#f4f4f4"/><rect x="556" y="467" width="1" height="1" fill="#f4f4f4"/><rect x="556" y="469" width="1" height="1" fill="#f4f4f4"/><rect x="556" y="471" width="1" height="1" fill="#f4f4f4"/><rect x="558" y="463" width="1" height="1" fill="#f4f4f4"/><rect x="558" y="465" width="1" height="1" fill="#f4f4f4"/><rect x="558" y="467" width="1" height="1" fill="#f4f4f4"/><rect x="558" y="469" width="1" height="1" fill="#f4f4f4"/><rect x="558" y="471" width="1" height="1" fill="#f4f4f4"/><rect x="560" y="463" width="1" height="1" fill="#f4f4f4"/><rect x="560" y="465" width="1" height="1" fill="#f4f4f4"/><rect x="560" y="467" width="1" height="1" fill="#f4f4f4"/><rect x="560" y="469" width="1" height="1" fill="#f4f4f4"/><rect x="560" y="471" width="1" height="1" fill="#f4f4f4"/>
<path d="M563,466.3 h4 l-2,2.6 z" fill="#333"/>
<g fill="#9cc0ea" stroke="#5a7fb8" stroke-width="0.6"><rect x="571.6" y="462.6" width="4.6" height="4.6" rx="0.6"/><rect x="577" y="462.6" width="4.6" height="4.6" rx="0.6"/><rect x="571.6" y="468" width="4.6" height="4.6" rx="0.6"/><rect x="577" y="468" width="4.6" height="4.6" rx="0.6"/></g>
<path d="M583.6,466.3 h4 l-2,2.6 z" fill="#333"/>
<rect x="0" y="478" width="1024" height="31" fill="#f2f2f2"/>
<line x1="0" y1="478.6" x2="1024" y2="478.6" stroke="#d4d4d4" stroke-width="1.3"/>
<rect x="7" y="490.8" width="1.8" height="8.8" fill="#4a4a4a"/><path d="M15.8,490.8 v8.8 l-6.3,-4.4 z" fill="#4a4a4a"/>
<path d="M30,490.8 v8.8 l-6.3,-4.4 z" fill="#4a4a4a"/><rect x="30.5" y="492.5" width="1.5" height="5.4" fill="#4a4a4a"/>
<path d="M40.4,490.8 v8.8 l7.9,-4.4 z" fill="#4a4a4a"/>
<rect x="56.6" y="492.5" width="1.5" height="5.4" fill="#4a4a4a"/><path d="M58.6,490.8 v8.8 l6.4,-4.4 z" fill="#4a4a4a"/>
<path d="M73.8,490.8 v8.8 l6.5,-4.4 z" fill="#4a4a4a"/><rect x="80.5" y="490.8" width="1.8" height="8.8" fill="#4a4a4a"/>
<path d="M98.0,489.9 H106.2 M98.0,489.9 V498.7 H102.7 M106.2,489.9 V493" fill="none" stroke="#777" stroke-width="0.7"/>
<rect x="97.1" y="489.0" width="1.8" height="1.8" fill="#2a9be8"/>
<rect x="105.3" y="489.0" width="1.8" height="1.8" fill="#2a9be8"/>
<rect x="97.1" y="497.8" width="1.8" height="1.8" fill="#2a9be8"/>
<path d="M102.8,499 l4.2,-4.2 l1.2,1.2 l-4.2,4.2 z" fill="#f0b030"/><path d="M107.0,494.8 l1.2,1.2 l0.8,-0.8 l-1.2,-1.2z" fill="#e04848"/>
<path d="M112.5,491.5 l2,-2 h7.5 v8 l-2,2 h-7.5 z" fill="#3d9ae0"/><path d="M112.5,491.5 h7.5 v8" fill="none" stroke="#a8d4f4" stroke-width="0.6"/><rect x="122.3" y="489.8" width="1.2" height="8.5" fill="#888"/>
<path d="M128.7,491.5 l2,-2 h7.5 v8 l-2,2 h-7.5 z" fill="#3d9ae0"/><path d="M128.7,491.5 h7.5 v8" fill="none" stroke="#a8d4f4" stroke-width="0.6"/><rect x="138.5" y="489.8" width="1.2" height="8.5" fill="#888"/>
<path d="M146.0,489.9 H154.2 M146.0,489.9 V498.7 H150.7 M154.2,489.9 V493" fill="none" stroke="#777" stroke-width="0.7"/>
<rect x="145.1" y="489.0" width="1.8" height="1.8" fill="#2a9be8"/>
<rect x="153.29999999999998" y="489.0" width="1.8" height="1.8" fill="#2a9be8"/>
<rect x="145.1" y="497.8" width="1.8" height="1.8" fill="#2a9be8"/>
<path d="M150.79999999999998,499 l4.2,-4.2 l1.2,1.2 l-4.2,4.2 z" fill="#f0b030"/><path d="M155.0,494.8 l1.2,1.2 l0.8,-0.8 l-1.2,-1.2z" fill="#e04848"/>
<path d="M154.8,486.2 Q154.8,485.6 155.6,485.6 H162 Q162.8,485.6 162.8,486.2 Q162.8,488 160.3,490 H157.3 Q154.8,488 154.8,486.2 z" fill="#555"/><rect x="158.1" y="487" width="1.4" height="19.8" fill="#555"/>
<path d="M98.4,505.8 h52.6" stroke="#bbb" stroke-width="0.8"/><line x1="103.4" y1="502.3" x2="103.4" y2="505.8" stroke="#bbb" stroke-width="0.8"/><line x1="118.6" y1="502.3" x2="118.6" y2="505.8" stroke="#bbb" stroke-width="0.8"/><line x1="134.5" y1="502.3" x2="134.5" y2="505.8" stroke="#bbb" stroke-width="0.8"/><line x1="150.6" y1="502.3" x2="150.6" y2="505.8" stroke="#bbb" stroke-width="0.8"/>
<g transform="translate(1009.8,495.3) scale(0.87)"><circle r="4.3" fill="#9a9a9a"/><rect x="-1.4" y="-6" width="2.8" height="2.6" fill="#9a9a9a" transform="rotate(0)"/><rect x="-1.4" y="-6" width="2.8" height="2.6" fill="#9a9a9a" transform="rotate(45)"/><rect x="-1.4" y="-6" width="2.8" height="2.6" fill="#9a9a9a" transform="rotate(90)"/><rect x="-1.4" y="-6" width="2.8" height="2.6" fill="#9a9a9a" transform="rotate(135)"/><rect x="-1.4" y="-6" width="2.8" height="2.6" fill="#9a9a9a" transform="rotate(180)"/><rect x="-1.4" y="-6" width="2.8" height="2.6" fill="#9a9a9a" transform="rotate(225)"/><rect x="-1.4" y="-6" width="2.8" height="2.6" fill="#9a9a9a" transform="rotate(270)"/><rect x="-1.4" y="-6" width="2.8" height="2.6" fill="#9a9a9a" transform="rotate(315)"/><circle r="1.8" fill="#f0f0f0"/></g>
<rect x="0" y="0" width="1024" height="54" fill="#f1f1f1"/>
<rect x="8.5" y="6.5" width="68.5" height="40" rx="3.5" fill="#f1f1f1" stroke="#dadada" stroke-width="1"/>
<text x="26.00" y="29.54" font-size="7.8" fill="#505050" font-weight="normal" textLength="24.80" lengthAdjust="spacingAndGlyphs" >DESIGN</text>
<path d="M54.7,25.5 h4 l-2,2.6 z" fill="#333"/>
<rect x="332.8" y="0" width="44.2" height="13.75" fill="#cde6f4"/><rect x="332.8" y="11.7" width="44.2" height="2" fill="#1a9ad9"/>
<text x="96.00" y="9.24" font-size="7.8" fill="#555" font-weight="normal" textLength="20.00" lengthAdjust="spacingAndGlyphs" >SOLID</text>
<text x="148.75" y="9.24" font-size="7.8" fill="#555" font-weight="normal" textLength="30.75" lengthAdjust="spacingAndGlyphs" >SURFACE</text>
<text x="210.50" y="9.24" font-size="7.8" fill="#555" font-weight="normal" textLength="45.10" lengthAdjust="spacingAndGlyphs" >SHEET METAL</text>
<text x="285.60" y="9.24" font-size="7.8" fill="#555" font-weight="normal" textLength="22.70" lengthAdjust="spacingAndGlyphs" >TOOLS</text>
<text x="341.50" y="9.24" font-size="7.8" fill="#2a8fd0" font-weight="normal" textLength="26.90" lengthAdjust="spacingAndGlyphs" >SKETCH</text>
<rect x="854" y="14" width="68.8" height="40" fill="#cfe7f5"/>
<text x="152.60" y="49.67" font-size="7.6" fill="#555" font-weight="normal" textLength="25.80" lengthAdjust="spacingAndGlyphs" >CREATE</text>
<path d="M180.6,45.4 h4 l-2,2.6 z" fill="#444"/>
<text x="288.75" y="49.67" font-size="7.6" fill="#555" font-weight="normal" textLength="25.00" lengthAdjust="spacingAndGlyphs" >MODIFY</text>
<path d="M316.75,45.4 h4 l-2,2.6 z" fill="#444"/>
<text x="500.00" y="49.67" font-size="7.6" fill="#555" font-weight="normal" textLength="47.00" lengthAdjust="spacingAndGlyphs" >CONSTRAINTS</text>
<path d="M549,45.4 h4 l-2,2.6 z" fill="#444"/>
<text x="713.00" y="49.67" font-size="7.6" fill="#555" font-weight="normal" textLength="27.00" lengthAdjust="spacingAndGlyphs" >INSPECT</text>
<path d="M742,45.4 h4 l-2,2.6 z" fill="#444"/>
<text x="765.80" y="49.67" font-size="7.6" fill="#555" font-weight="normal" textLength="22.60" lengthAdjust="spacingAndGlyphs" >INSERT</text>
<path d="M790,45.4 h4 l-2,2.6 z" fill="#444"/>
<text x="811.90" y="49.67" font-size="7.6" fill="#555" font-weight="normal" textLength="25.10" lengthAdjust="spacingAndGlyphs" >SELECT</text>
<path d="M838.8,45.4 h4 l-2,2.6 z" fill="#444"/>
<text x="860.60" y="49.67" font-size="7.6" fill="#555" font-weight="normal" textLength="48.90" lengthAdjust="spacingAndGlyphs" >FINISH SKETCH</text>
<path d="M912,45.4 h4 l-2,2.6 z" fill="#444"/>
<rect x="257.8" y="17" width="1" height="34" fill="#dadada"/>
<rect x="351.5" y="17" width="1" height="34" fill="#dadada"/>
<rect x="702.8" y="17" width="1" height="34" fill="#dadada"/>
<rect x="755.5" y="17" width="1" height="34" fill="#dadada"/>
<rect x="801.2" y="17" width="1" height="34" fill="#dadada"/>
<path d="M88.2,33.2 H101.6 A6.8,5.15 0 0 0 101.6,22.9" fill="none" stroke="#6e6e6e" stroke-width="1"/>
<rect x="87.10" y="32.10" width="2.2" height="2.2" fill="#1e90e0"/>
<rect x="100.50" y="32.10" width="2.2" height="2.2" fill="#1e90e0"/>
<rect x="100.50" y="21.80" width="2.2" height="2.2" fill="#1e90e0"/>
<rect x="116.4" y="20.3" width="19.6" height="14.1" fill="none" stroke="#6e6e6e" stroke-width="1"/>
<rect x="115.30" y="19.20" width="2.2" height="2.2" fill="#1e90e0"/>
<rect x="134.90" y="33.30" width="2.2" height="2.2" fill="#1e90e0"/>
<circle cx="155" cy="27.3" r="10.4" fill="none" stroke="#6e6e6e" stroke-width="1"/><line x1="149.5" y1="33" x2="160.5" y2="21.7" stroke="#1e90e0" stroke-width="1"/>
<rect x="148.20" y="32.00" width="2.2" height="2.2" fill="#1e90e0"/>
<rect x="153.90" y="26.20" width="2.2" height="2.2" fill="#1e90e0"/>
<rect x="159.70" y="20.40" width="2.2" height="2.2" fill="#1e90e0"/>
<path d="M174,37.8 C174,30 176,24.5 178.3,24.2 C182,24 186,33 190,32.5 C193,32 193.7,24 193.7,18" fill="none" stroke="#6e6e6e" stroke-width="1"/>
<rect x="172.90" y="36.70" width="2.2" height="2.2" fill="#1e90e0"/>
<rect x="177.20" y="23.10" width="2.2" height="2.2" fill="#1e90e0"/>
<rect x="188.90" y="31.40" width="2.2" height="2.2" fill="#1e90e0"/>
<rect x="192.60" y="16.90" width="2.2" height="2.2" fill="#1e90e0"/>
<path d="M202.5,37.2 L212.3,19.2 V37.2 Z" fill="none" stroke="#6e6e6e" stroke-width="1"/><path d="M213,19.2 L222,37.2 H213" fill="none" stroke="#1e90e0" stroke-width="1"/><rect x="212" y="18.5" width="1.2" height="19.5" fill="#999"/>
<rect x="230.3" y="18.75" width="1" height="18.75" fill="#6e6e6e"/><rect x="251.5" y="18.75" width="1" height="18.75" fill="#6e6e6e"/><line x1="232" y1="24.5" x2="251" y2="24.5" stroke="#1e90e0" stroke-width="1"/>
<path d="M231.5,24.5 l3,-1.6 v3.2z M251.3,24.5 l-3,-1.6 v3.2z" fill="#1e90e0"/>
<path d="M266.5,38 V30" stroke="#999" stroke-width="1.2"/><path d="M266.5,30 A12.5,12.5 0 0 1 279,17.5" fill="none" stroke="#1e90e0" stroke-width="1"/><path d="M280,17.5 H288" stroke="#6e6e6e" stroke-width="1.2"/>
<path d="M295.2,19 H306" stroke="#7ab8e8" stroke-width="1" stroke-dasharray="1.8,1.2"/><path d="M311.6,19 H317" stroke="#6e6e6e" stroke-width="1"/>
<path d="M300.2,22.2 L301.8,21.2 L309.6,31.6 L308.4,32.8 Z" fill="#1e1e1e"/><path d="M307.6,18.2 L309.2,18.4 L309.2,31.4 L307.6,31.4 Z" fill="#1e1e1e"/>
<ellipse cx="307.3" cy="35.3" rx="1.9" ry="2.5" transform="rotate(20 307.3 35.3)" fill="none" stroke="#1e1e1e" stroke-width="1.2"/><ellipse cx="311.7" cy="33.9" rx="1.9" ry="2.5" transform="rotate(-30 311.7 33.9)" fill="none" stroke="#1e1e1e" stroke-width="1.2"/>
<path d="M345,20.3 H332 A7.9,7.9 0 0 0 332,36 H345" fill="none" stroke="#1e90e0" stroke-width="1.2"/><path d="M345,23.3 H333 A4.9,4.9 0 0 0 333,33 H345" fill="none" stroke="#6e6e6e" stroke-width="1"/>
<path d="M366.2,19.5 l3,2 l-3,2 M366.2,22.8 l3,2 l-3,2 M366.2,26.1 l3,2 l-3,2" fill="none" stroke="#d9434b" stroke-width="0.9"/><rect x="370.9" y="18.6" width="1.1" height="11.2" fill="#6e6e6e"/><rect x="364.3" y="32" width="11.7" height="1.1" fill="#6e6e6e"/><path d="M364.6,34.4 H376 M365.2,37.3 l2,-2.6 M368.3,37.3 l2,-2.6 M371.4,37.3 l2,-2.6 M374.5,37.3 l1.6,-2.2" stroke="#d9434b" stroke-width="0.9"/>
<rect x="389.2" y="17.5" width="1" height="20" fill="#d9434b"/><rect x="390" y="37" width="20" height="1" fill="#6e6e6e"/><rect x="388.8" y="36.6" width="1.9" height="1.9" fill="#d9434b"/>
<circle cx="425.3" cy="30.5" r="8" fill="none" stroke="#d9434b" stroke-width="1"/><line x1="425" y1="18" x2="437.7" y2="31" stroke="#6e6e6e" stroke-width="1"/>
<rect x="450" y="23.4" width="13" height="2.4" fill="#d9434b"/><rect x="450" y="30.2" width="13" height="2.6" fill="#666"/>
<line x1="477.5" y1="32.5" x2="489.7" y2="20.3" stroke="#d9434b" stroke-width="1"/><line x1="481" y1="35.6" x2="492.8" y2="23.75" stroke="#6e6e6e" stroke-width="1"/>
<line x1="505.5" y1="23" x2="518.75" y2="36.25" stroke="#d9434b" stroke-width="1"/><line x1="512.5" y1="29" x2="522" y2="20" stroke="#6e6e6e" stroke-width="1"/>
<path d="M538,27 V23.5 A4.8,4.8 0 0 1 547.6,23.5 V27" fill="none" stroke="#d9434b" stroke-width="1.8"/><rect x="534.2" y="26.5" width="16.5" height="11.8" rx="1.2" fill="#e0747a" stroke="#d9434b" stroke-width="0.8"/><rect x="542" y="30" width="1" height="3" fill="#a03038"/>
<path d="M562.3,36.5 L571.25,21.8 L580.2,36.5 Z" fill="none" stroke="#d9434b" stroke-width="1.1"/>
<circle cx="600" cy="28" r="9.2" fill="none" stroke="#d9434b" stroke-width="1"/><circle cx="600" cy="28" r="5.4" fill="none" stroke="#6e6e6e" stroke-width="1.1"/>
<line x1="619.5" y1="36.7" x2="630.5" y2="26" stroke="#6e6e6e" stroke-width="1"/><line x1="631" y1="25" x2="637.5" y2="19" stroke="#d9434b" stroke-width="1"/><line x1="619" y1="23" x2="624" y2="28" stroke="#222" stroke-width="0.9"/><path d="M626,30 l-3.8,-1 l2.8,-2.8z" fill="#222"/>
<path d="M652,21.5 H648.8 V34.7 H652" fill="none" stroke="#d9434b" stroke-width="1.3"/><path d="M662,21.5 H665.2 V34.7 H662" fill="none" stroke="#6e6e6e" stroke-width="1.3"/><line x1="657" y1="18.75" x2="657" y2="37.5" stroke="#d9434b" stroke-width="1.2" stroke-dasharray="4,1.5"/>
<line x1="681" y1="19.5" x2="694.4" y2="32.5" stroke="#d9434b" stroke-width="1"/><path d="M677.5,23.5 C682,22 686,24 687.8,26.3 C689,28 688,33 690.5,35.6" fill="none" stroke="#6e6e6e" stroke-width="1"/><circle cx="687.8" cy="26.3" r="1.1" fill="#d9434b"/>
<rect x="720.5" y="29" width="19.2" height="4.6" fill="#f5a623"/><path d="M722,29 v1.5 M724,29 v1 M726,29 v1.5 M728,29 v1 M730,29 v1.5 M732,29 v1 M734,29 v1.5 M736,29 v1 M738,29 v1.5" stroke="#b07010" stroke-width="0.5"/><path d="M721,23 v6 M739.2,23 v6" stroke="#666" stroke-width="0.8"/><line x1="722" y1="25.3" x2="738.2" y2="25.3" stroke="#555" stroke-width="0.7"/><path d="M721.5,25.3 l2.5,-1.2 v2.4z M738.7,25.3 l-2.5,-1.2 v2.4z" fill="#444"/>
<rect x="769" y="18" width="19.75" height="19.5" fill="#7fc4f0"/><path d="M769,37.5 V31 Q772,25 775,27 Q778,29 780,32 Q782,30 784,30 Q786,30 788.75,33 V37.5 Z" fill="#3b8fd0"/><circle cx="783.5" cy="23" r="1.6" fill="#fff8c0"/>
<rect x="814.7" y="15.3" width="25.3" height="25.7" fill="#0e93d6"/><rect x="816.3" y="17.2" width="19.8" height="14.8" fill="none" stroke="#3fb56a" stroke-width="0.7" stroke-dasharray="1.5,1.2"/><path d="M831,27.8 V37.5 L833,35.5 L835,39 L836.5,38.2 L834.6,34.8 L837.5,34.5 Z" fill="#fff" stroke="#333" stroke-width="0.6"/>
<circle cx="886" cy="28" r="8.5" fill="#6cc024"/><path d="M881.8,28.3 L885,31.3 L890.5,25.4" fill="none" stroke="#fff" stroke-width="2.2" stroke-linecap="round" stroke-linejoin="round"/>
<rect x="0" y="54" width="1024" height="21" fill="#0696d7"/>
<text x="343" y="67.3" font-size="9" font-weight="bold" fill="#ffffff" textLength="275" lengthAdjust="spacingAndGlyphs">Help us to improve Generative Design by taking this brief survey - </text>
<text x="621.3" y="67.3" font-size="9" font-weight="bold" fill="#ffffff" textLength="42.2" lengthAdjust="spacingAndGlyphs">Click here</text>
<rect x="621.3" y="68.6" width="42.2" height="0.9" fill="#fff"/>
<path d="M1006.8,61.3 L1013,67.3 M1013,61.3 L1006.8,67.3" stroke="#fff" stroke-width="1.5"/>
</svg></body></html>
